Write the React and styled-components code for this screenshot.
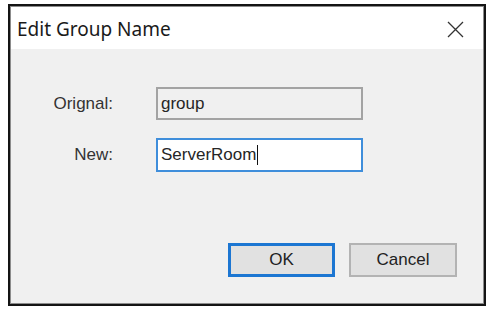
import React from 'react';
import styled, { createGlobalStyle } from 'styled-components';

const GlobalStyle = createGlobalStyle`
  body {
    margin: 0;
    background: #ffffff;
    font-family: "Liberation Sans", Arial, sans-serif;
  }
`;

const Page = styled.div`
  padding: 4px 0 0 8px;
`;

const Dialog = styled.div`
  width: 478px;
  height: 302px;
  box-sizing: border-box;
  border: 2px solid #141414;
  display: flex;
  flex-direction: column;
`;

const Inner = styled.div`
  flex: 1;
  border: 1px solid #8c8c8c;
  display: flex;
  flex-direction: column;
  background: #f0f0f0;
`;

const TitleBar = styled.div`
  height: 42px;
  background: #ffffff;
  display: flex;
  align-items: center;
  justify-content: space-between;
  padding: 0 19px 0 6px;
`;

const Title = styled.div`
  font-family: "Noto Sans", "Open Sans", sans-serif;
  font-size: 19px;
  color: #1a1a1a;
  padding-top: 1px;
`;

const Close = styled.svg`
  width: 17px;
  height: 17px;
  margin-top: 2px;
`;

const Body = styled.div`
  flex: 1;
  display: flex;
  flex-direction: column;
  padding: 38px 26px 26px 0;
`;

const Form = styled.div`
  display: grid;
  grid-template-columns: 102px 207px;
  column-gap: 43px;
  row-gap: 18px;
`;

const Label = styled.div`
  text-align: right;
  align-self: center;
  font-size: 17px;
  color: #333;
`;

const Field = styled.div`
  height: ${p => (p.$active ? 34 : 33)}px;
  box-sizing: border-box;
  border: 2px solid ${p => (p.$active ? '#3f8edb' : '#a3a3a3')};
  background: ${p => (p.$active ? '#ffffff' : '#f0f0f0')};
  display: flex;
  align-items: center;
  padding-left: 3px;
  font-size: 17px;
  color: #262626;
`;

const Caret = styled.span`
  display: inline-block;
  width: 1px;
  height: 20px;
  background: #111;
  margin-left: 1px;
`;

const Buttons = styled.div`
  margin-top: auto;
  display: flex;
  justify-content: flex-end;
  gap: 14px;
`;

const Button = styled.div`
  width: ${p => (p.$wide ? 108 : 107)}px;
  height: 34px;
  box-sizing: border-box;
  border: ${p => (p.$primary ? '3px solid #1c76d2' : '2px solid #b3b3b3')};
  background: #e1e1e1;
  display: flex;
  align-items: center;
  justify-content: center;
  font-size: 17px;
  color: #222;
`;

export default function App() {
  return (
    <Page>
      <GlobalStyle />
      <Dialog>
        <Inner>
          <TitleBar>
            <Title>Edit Group Name</Title>
            <Close viewBox="0 0 17 17">
              <path d="M1 1 L16 16 M16 1 L1 16" stroke="#333" strokeWidth="1.3" fill="none" />
            </Close>
          </TitleBar>
          <Body>
            <Form>
              <Label>Orignal:</Label>
              <Field>group</Field>
              <Label>New:</Label>
              <Field $active>ServerRoom<Caret /></Field>
            </Form>
            <Buttons>
              <Button $primary>OK</Button>
              <Button $wide>Cancel</Button>
            </Buttons>
          </Body>
        </Inner>
      </Dialog>
    </Page>
  );
}
